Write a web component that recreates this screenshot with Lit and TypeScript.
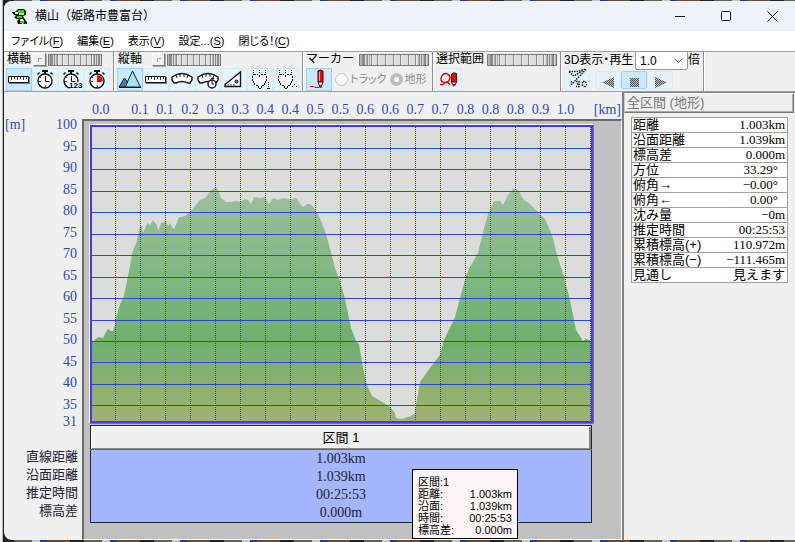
import { LitElement, html, svg, css } from "lit";
import { customElement } from "lit/decorators.js";

type Icon = { name: string; art: unknown; on?: boolean };

const clock = svg`
  <path d="M9 1h6v2h-2v2h-2V3H9zM4 5l2-2 1 1-2 2zM18 3l2 2-1 1-2-2z" fill="#111"/>
  <circle cx="12" cy="12" r="7" fill="#fff" stroke="#111" stroke-width="1.4"/>
  <path d="M12.500 7v5.500h4" fill="none" stroke="#111"/>
  <path d="M6 12.500h2M12.500 16v2M7.500 8v1M16.500 16v1M7.500 16v1" stroke="#555"/>`;
const ruler = svg`
  <path d="M1.500 7.500h20v6h-20z" fill="#fff" stroke="#111"/>
  <path d="M2 14.500h21M22.500 8v7" stroke="#777"/>
  <path d="M4.500 8v3M7.500 8v2M10.500 8v3M13.500 8v2M16.500 8v3M19.500 8v2" stroke="#333"/>`;
const arcRuler = svg`
  <path d="M2 8q10-7 20 0v3l-2 3h-2q-6-3-12 0H4l-2-3z" fill="#fff" stroke="#111" stroke-width="1.400"/>
  <path d="M6 6l1 3M10 5v3M14 5v3M18 6l-1 3" stroke="#222"/>`;
const heart = svg`
  <path d="M6 7h12v8l-4 4h-3l-4-4z" fill="#fff"/>
  <g shape-rendering="crispEdges" fill="none" stroke="#111">
    <path d="M5.500 1v5M11.500 1v3M17.500 1v5" stroke-dasharray="1 1"/>
    <path d="M6 5.500h4M13 5.500h4M11.500 6v2M4.500 7v5M18.500 7v5" stroke-dasharray="2 1"/>
    <path d="M5.500 12v2M17.500 12v2M6.500 14v2M16.500 14v2M8 16.500h2M14 16.500h2M10.500 17v2M13.500 17v2M11 19.500h2"/>
  </g>`;

const wheelPath = [2, 3, 4, 6, 9, 14, 20, 26, 32, 38, 43, 46, 48, 50, 51];

const horizontalTools: Icon[] = [
  { name: "距離", art: ruler, on: true },
  { name: "時間", art: clock },
  { name: "時刻", art: svg`${clock}<path d="M11 13h13v7H11z" fill="#e5f3ff"/><text x="10" y="19" class="tiny">123</text>` },
  { name: "経過", art: svg`${clock}<path d="M12 12V6a6 6 0 0 1 6 6z" fill="#f00"/>` },
];
const verticalTools: Icon[] = [
  { name: "標高", on: true, art: svg`<path d="M7 18L14.500 2 22.500 18z" fill="#a4e2f5" stroke="#123"/><path d="M1 18L6.500 9l3 4-2 5z" fill="#52798d" stroke="#123"/><path d="M1 18.500h22" stroke="#111"/>` },
  { name: "距離", art: ruler },
  { name: "沿面", art: arcRuler },
  { name: "沿面時間", art: svg`${arcRuler}<circle cx="16" cy="15" r="4" fill="#fff" stroke="#111" stroke-width="1.400"/><path d="M16 12v3h2M15 9.500h3" fill="none" stroke="#111"/>` },
  { name: "傾斜", art: svg`<path d="M3 15.500L18.500 3v14.500H3z" fill="#fff" stroke="#111" stroke-width="1.400"/><circle cx="14.500" cy="12.500" r="1.500" fill="#777" stroke="#111"/><path d="M6 15v2M9 15v2M12 15v2" stroke="#555"/>` },
  { name: "心拍1", art: svg`${heart}<path d="M20.500 13v7M19 19.500h4" fill="none" stroke="#111" stroke-dasharray="1 1" shape-rendering="crispEdges"/>` },
  { name: "心拍2", art: svg`${heart}<path d="M18 17.500h1M20 15.500h1M22 17.500h1" stroke="#111" shape-rendering="crispEdges"/>` },
];
const pen = svg`<path d="M11 2q2.500-2 5 0v11h-5z" fill="#f00" stroke="#500"/><path d="M12.500 3v9" stroke="#fbb"/><path d="M11 13h5l-2 5h-1z" fill="#fff" stroke="#500"/><path d="M12.500 16h2v3h-2z" fill="#d00"/>`;
const markerTools: Icon[] = [
  { name: "ペン", on: true, art: svg`${pen}<path d="M3 17.500h4l1 1h4" fill="none" stroke="#f00"/>` },
];
const rangeTools: Icon[] = [
  { name: "範囲", art: svg`<path d="M3 15.500h3l2-2q-4 0-4-4 1-5 5-5 4 1 4 4.500-1 4.500-5 4.500M8 13.500q3-1 5 2" fill="none" stroke="#f00" stroke-width="1.400"/><path d="M14.500 5q2-2 5-.5v8.500h-5z" fill="#f00" stroke="#500"/><path d="M14.500 13h5l-2 4h-1z" fill="#fff" stroke="#500"/><path d="M16 15h2v2h-2z" fill="#d00"/>` },
];
const viewTools: Icon[] = [
  { name: "3D", art: svg`<g fill="none" stroke="#111" stroke-width="1.400" stroke-dasharray="1.500 1"><path d="M4 3.500h8L21 1M4 4l5 4M21 1.500L5 18M10 7.500l8-5M6.500 13v4"/><path d="M11 13.500h3v5h-3M12 16h2M17.500 14v4M18 13.500h2l1.500 1.500v2L20 18.500h-2"/></g>` },
];
const playTools: Icon[] = [
  { name: "逆再生", art: svg`<path d="M18 5v11L6 10.500z" fill="url(#dots)"/>` },
  { name: "停止", on: true, art: svg`<path d="M8 6h9v9H8z" fill="url(#dots)"/>` },
  { name: "再生", art: svg`<path d="M7 5v11l12-5.500z" fill="url(#dots)"/>` },
];

const kmLabels = "0.0 0.1 0.1 0.2 0.3 0.3 0.4 0.4 0.5 0.5 0.6 0.6 0.7 0.7 0.8 0.8 0.8 0.9 1.0".split(" ");
const elevations = [100, 95, 90, 85, 80, 75, 70, 65, 60, 55, 50, 45, 40, 35, 31];
const gridRows = [148, 169, 191, 212, 234, 255, 277, 298, 320, 341, 362, 384, 405];
const gridCols = [91, ...Array.from({ length: 20 }, (_, i) => 115 + i * 25)];

const profile =
  "91,341 94,341 98,337 103,338 105,334 108,329 111,331 113,331 115,325 116,318 120,304 124,296 127,281 130,266 132,254 134,248 136,244 138,235 140,226 142,226 143,233 146,226 148,223 150,225 152,222 153,220 155,223 157,225 158,231 161,223 164,222 166,221 168,226 170,223 172,227 174,229 177,222 179,217 182,217 185,216 190,212 195,206 200,200 205,198 207,196 210,191 214,188 216,187 218,190 221,198 226,202 230,202 237,201 240,202 245,199 248,200 251,204 254,197 260,198 265,197 269,204 272,199 274,198 278,200 283,198 289,199 292,199 296,198 299,202 303,207 307,204 310,204 314,208 318,214 322,223 326,234 332,256 335,268 340,281 345,299 351,328 356,341 359,344 363,368 367,385 372,396 384,403 391,408 395,413 396,418 402,419 411,416 415,413 416,405 420,382 430,368 440,355 444,340 455,317 466,276 470,267 478,253 483,232 488,214 494,201 500,201 503,205 508,195 513,189 516,189 519,191 523,199 530,204 537,211 545,219 552,235 557,255 564,277 570,300 576,330 583,341 586,339 592,341";

const summary: [string, string][] = [
  ["距離", "1.003km"], ["沿面距離", "1.039km"], ["標高差", "0.000m"], ["方位", "33.29°"],
  ["俯角→", "−0.00°"], ["俯角←", "0.00°"], ["沈み量", "−0m"], ["推定時間", "00:25:53"],
  ["累積標高(+)", "110.972m"], ["累積標高(−)", "−111.465m"], ["見通し", "見えます"],
];
const section: [string, string][] = [
  ["直線距離", "1.003km"], ["沿面距離", "1.039km"], ["推定時間", "00:25:53"], ["標高差", "0.000m"],
];
const tip: [string, string][] = [
  ["距離:", "1.003km"], ["沿面:", "1.039km"], ["時間:", "00:25:53"], ["標高差:", "0.000m"],
];

@customElement("app-root")
export class AppRoot extends LitElement {
  static styles = css`
    :host {
      display: flex;
      box-sizing: border-box;
      min-height: 100vh;
      padding: 1px 0 2px 4px;
      color: #000;
      font: 13px/15px "Liberation Sans", "Noto Sans CJK JP", sans-serif;
      background:
        linear-gradient(90deg, #f4f4f4 2px, #b8b8b8 2px, #b8b8b8 3px, transparent 3px) 0 0 / 4px 100% no-repeat,
        repeating-linear-gradient(90deg, #222 0 14px, #5a6a4a 14px 32px, #c8c8c8 32px 40px, #223a9a 40px 47px, #6a4a2a 47px 70px);
    }
    * { box-sizing: border-box; }
    button { font: inherit; color: inherit; padding: 0; border: 0; background: none; white-space: nowrap; }
    table { border-collapse: collapse; }
    th, td { padding: 0; font-weight: 400; }
    .window { flex: 1; min-width: 0; display: flex; flex-direction: column; background: #f0f0f0; border-radius: 8px 0 0 8px; overflow: hidden; }
    .title { display: flex; align-items: center; height: 30px; padding-left: 7px; gap: 7px; background: #eef3fb; }
    .title h1 { flex: 1; margin: 0; font-size: 12px; font-weight: 400; }
    .controls { display: flex; }
    .controls button { width: 46px; height: 29px; display: grid; place-items: center; }
    .menu { display: flex; gap: 14px; height: 20px; align-items: center; padding-left: 7px; background: #fff; font-size: 11px; font-feature-settings: "palt"; }
    .menu u { text-underline-offset: 2px; }
    .toolbar { display: flex; height: 41px; border-top: 1px solid #a0a0a0; border-bottom: 1px solid #a0a0a0; }
    .group { display: flex; flex-direction: column; padding: 0 2px; border-right: 1px solid #909090; box-shadow: 1px 0 #fff; margin-right: 1px; }
    .head { display: flex; align-items: center; gap: 2px; height: 15px; padding: 0 1px; font-size: 12px; white-space: nowrap; }
    .head .wheel { margin-left: auto; }
    .head .mini + .wheel { margin-left: 0; }
    .h { width: 110px; } .v { width: 188px; } .m { width: 129px; } .r { width: 127px; } .d { width: 142px; }
    .m .head, .r .head { padding-left: 0; }
    .mini { width: 13px; height: 13px; border: 1px solid; border-color: #fff #777 #777 #fff; box-shadow: 1px 1px #aaa; display: grid; place-items: center; }
    .mini i { width: 4px; height: 4px; border: 1px solid #aaa; border-right: 0; border-bottom: 0; }
    .v .mini { margin-left: 8px; }
    .wheel { width: 54px; height: 12px; }
    .wide { width: 70px; }
    .row { display: flex; align-items: center; height: 24px; }
    .tool { flex: none; width: 26px; height: 23px; background: #e5f3ff; border: 1px solid #d6ebfc; }
    .tool.on { background: #cce8ff; border-color: #99d1ff; }
    .tool svg { display: block; overflow: visible; }
    .play { display: flex; margin-left: 5px; padding-top: 3px; }
    .play .tool { height: 18px; border-radius: 2px; display: grid; place-items: center; }
    .tiny { font: bold 8px "Liberation Sans", sans-serif; }
    .radio { display: flex; align-items: center; gap: 2px; margin-left: 3px; color: #8a8a8a; font-size: 11px; white-space: nowrap; font-feature-settings: "palt"; }
    .radio input { flex: none; appearance: none; width: 13px; height: 13px; margin: 0; border: 1px solid #c4c4c4; border-radius: 50%; background: #fbfbfb; }
    .radio input:checked { border: 4px solid #bdbdbd; background: #fff; }
    .d .head { height: 19px; margin-top: -1px; margin-bottom: -4px; padding-left: 0; gap: 0; }
    .d .head label { font-feature-settings: "palt"; }
    select { appearance: none; width: 53px; height: 19px; padding: 0 4px; font: 12px "Liberation Sans", sans-serif; border: 1px solid #999; border-radius: 2px; background: #fff; }
    .pick { display: grid; margin-left: auto; }
    .pick > * { grid-area: 1 / 1; }
    .pick svg { place-self: center end; margin-right: 5px; pointer-events: none; }
    .main { flex: 1; display: grid; grid-template-columns: 78px minmax(0, 1fr) 173px; }
    .axis { color: #3048c8; font: 14px/14px "Liberation Serif", serif; }
    .left { display: flex; flex-direction: column; padding-top: 26px; text-align: right; }
    .ylab { display: grid; grid-template-columns: 1fr auto; padding-right: 5px; }
    .ylab > span { text-align: left; padding-left: 1px; }
    .ylab ol { list-style: none; margin: 0; padding: 0; display: grid; grid-template-rows: repeat(13, minmax(0, 5fr)) minmax(0, 4fr) 14px; height: 311px; }
    .rows { list-style: none; margin: 0; padding: 19px 4px 0 0; line-height: 18px; color: #223; }
    .center { display: flex; flex-direction: column; min-width: 0; }
    .xlab { display: flex; height: 27px; padding: 11px 0 0 8px; }
    .xlab ol { flex: 1; list-style: none; margin: 0; padding: 0; display: grid; grid-template-columns: 3fr repeat(18, 2fr); text-align: center; }
    .xlab li:first-child { text-align: left; padding-left: 2px; }
    .xlab span { width: 44px; text-align: right; padding-right: 1px; }
    .board { flex: 1; position: relative; background: #c0c0c0; border: 2px solid #696969; border-right: 1px solid #fff; border-bottom: 1px solid #fff; padding: 3px 27px 15px 5px; }
    .plot { border: 1px solid; border-color: #fff #777 #777 #fff; }
    .plot svg { display: block; width: 100%; height: 298px; background: #dcdcdc; }
    .section { width: calc(100% - 3px); margin: 1px 2px 0 1px; text-align: center; background: #a4b6ff; border: 1px solid #223; color: #223; }
    .section th { height: 24px; color: #000; background: #f0f0f0; border-bottom: 1px solid #666; box-shadow: inset 1px 1px #fff, inset -2px -1px #888; }
    .section td { height: 18px; font: 14px/18px "Liberation Serif", serif; }
    .tip { position: absolute; left: 328px; top: 348px; width: 106px; padding: 6px 5px 2px; background: #fff5f5; border: 1px solid #000; font-size: 11px; line-height: 12px; }
    .tip table { width: 100%; }
    .tip td { text-align: right; }
    .tip th { text-align: left; }
    .side { border-left: 2px solid #808080; border-top: 1px solid #808080; padding-right: 1px; }
    .side h2 { margin: 0; height: 20px; padding-left: 2px; font-size: 13px; line-height: 17px; font-weight: 400; color: #777; border: 1px solid; border-color: #fff #777 #777 #ccc; box-shadow: inset -1px -1px #aaa; }
    .side table { width: calc(100% - 13px); margin: 4px 6px 0 7px; background: #fff; border: 1px solid #a0a0a0; }
    .side tr { border-bottom: 1px solid #a0a0a0; }
    .side th, .side td { height: 15px; line-height: 14px; white-space: nowrap; }
    .side th { text-align: left; padding-left: 1px; }
    .side td { text-align: right; padding-right: 2px; font-family: "Liberation Serif", "Noto Sans CJK JP", serif; }
    .side td.deg { padding-right: 9px; }
  `;

  private tools(list: Icon[]) {
    return list.map(
      (t) => html`<button class="tool ${t.on ? "on" : ""}" aria-label=${t.name}>
        <svg width="24" height="20" viewBox="0 0 24 20">
          <defs><pattern id="dots" width="2" height="2" patternUnits="userSpaceOnUse"><path d="M0 0h2v2H0z" fill="#bbb"/><path d="M0 0h1v1H0zM1 1h1v1H1z" fill="#555"/></pattern></defs>
          ${t.art}
        </svg>
      </button>`
    );
  }

  private wheel(wide = false) {
    const w = wide ? 70 : 54;
    const k = w / 54;
    const edge = Math.round(8 * k);
    return html`<svg class="wheel ${wide ? "wide" : ""}" viewBox="0 0 ${w} 12">
      <path d="M0 0H${w}V12H0Z" fill="#dedede" />
      <path d="M1 1h${edge}v10h-${edge}zM${w - edge - 1} 1h${edge}v10h-${edge}z" fill="#b4b4b4" />
      ${wheelPath.map((x) => svg`<path d="M${Math.round(x * k) + 0.5} 1v10" stroke="#8c8c8c"/><path d="M${Math.round(x * k) + 1.5} 1v10" stroke="#f4f4f4" opacity=".6"/>`)}
      <path d="M.5 .5H${w - 0.5}V11.500H.5Z" fill="none" stroke="#777" />
    </svg>`;
  }

  private mini(name: string) {
    return html`<button class="mini" aria-label=${name}><i></i></button>`;
  }

  render() {
    return html`
      <div class="window">
        <header class="title">
          <svg width="17" height="17" viewBox="0 0 17 17">
            <path d="M1 4h3l3-3h6l2 2v4l-3 1 1 2 3 4v2h-3l-1-1-2 1H7l-1-3 2-2H5L3 9l2-1-3-2z" fill="#111" />
            <path d="M4 4h3v2H4zM9 11h3l1 2H9z" fill="#fff" />
            <path d="M7 2h6v3H7zM9 13h4v2H9zM6 8h5v2H6z" fill="#3c3" />
            <path d="M8 5h5v2H8z" fill="#ee2" />
          </svg>
          <h1>横山（姫路市豊富台）</h1>
          <div class="controls">
            <button aria-label="最小化"><svg width="11" height="11"><path d="M0 5.500h10" stroke="#111" /></svg></button>
            <button aria-label="最大化"><svg width="11" height="11"><rect x=".5" y=".5" width="9" height="9" rx="1" fill="none" stroke="#111" /></svg></button>
            <button aria-label="閉じる"><svg width="11" height="11"><path d="M.5 .5l10 10M10.500 .5l-10 10" stroke="#111" /></svg></button>
          </div>
        </header>
        <nav class="menu">
          <button>ファイル(<u>F</u>)</button><button>編集(<u>E</u>)</button><button>表示(<u>V</u>)</button><button>設定...(<u>S</u>)</button><button>閉じる！(<u>C</u>)</button>
        </nav>
        <div class="toolbar">
          <div class="group h">
            <div class="head"><span>横軸</span>${this.mini("横軸リセット")}${this.wheel()}</div>
            <div class="row">${this.tools(horizontalTools)}</div>
          </div>
          <div class="group v">
            <div class="head"><span>縦軸</span>${this.mini("縦軸リセット")}${this.wheel()}</div>
            <div class="row">${this.tools(verticalTools)}</div>
          </div>
          <div class="group m">
            <div class="head"><span>マーカー</span>${this.wheel(true)}</div>
            <div class="row">
              ${this.tools(markerTools)}
              <label class="radio"><input type="radio" name="mark" disabled />トラック</label>
              <label class="radio"><input type="radio" name="mark" checked disabled />地形</label>
            </div>
          </div>
          <div class="group r">
            <div class="head"><span>選択範囲</span>${this.wheel(true)}</div>
            <div class="row">${this.tools(rangeTools)}</div>
          </div>
          <div class="group d">
            <div class="head">
              <label for="speed">3D表示・再生</label>
              <div class="pick">
                <select id="speed"><option>1.0</option></select>
                <svg width="9" height="6"><path d="M.5 .5l4 4 4-4" fill="none" stroke="#666" /></svg>
              </div>
              <span>倍</span>
            </div>
            <div class="row">${this.tools(viewTools)}<div class="play">${this.tools(playTools)}</div></div>
          </div>
        </div>
        <div class="main">
          <div class="left">
            <div class="ylab axis">
              <span>[m]</span>
              <ol>${elevations.map((e) => html`<li>${e}</li>`)}</ol>
            </div>
            <ul class="rows">${section.map(([k]) => html`<li>${k}</li>`)}</ul>
          </div>
          <div class="center">
            <div class="xlab axis">
              <ol>${kmLabels.map((k) => html`<li>${k}</li>`)}</ol>
              <span>[km]</span>
            </div>
            <div class="board">
              <div class="plot">
                <svg viewBox="90 125 503 298" preserveAspectRatio="none" role="img" aria-label="標高断面図">
                  <defs>
                    <linearGradient id="land" gradientUnits="userSpaceOnUse" x1="0" y1="188" x2="0" y2="422">
                      <stop offset="0" stop-color="#9cc09e" /><stop offset=".65" stop-color="#6db06e" /><stop offset="1" stop-color="#a3b173" />
                    </linearGradient>
                  </defs>
                  <path d="M91,422 L${profile} 592,422Z" fill="url(#land)" />
                  <g shape-rendering="crispEdges">
                    ${gridRows.map((y) => svg`<path d="M91 ${y + 0.5}H592" stroke="#2c48cc"/>`)}
                    ${gridCols.map((x) => svg`<path d="M${x + 0.5} 127V422" stroke="#2c38f0" stroke-dasharray="1 1"/>`)}
                    <path d="M91 126H592V422H91Z" fill="none" stroke="#4038ff" stroke-width="2" />
                  </g>
                </svg>
              </div>
              <table class="section">
                <thead><tr><th scope="col">区間 1</th></tr></thead>
                <tbody>${section.map(([k, v]) => html`<tr><td aria-label="${k} ${v}">${v}</td></tr>`)}</tbody>
              </table>
              <div class="tip" role="tooltip">
                区間:1
                <table>${tip.map(([k, v]) => html`<tr><th scope="row">${k}</th><td>${v}</td></tr>`)}</table>
              </div>
            </div>
          </div>
          <aside class="side">
            <h2>全区間 (地形)</h2>
            <table>
              ${summary.map(([k, v]) => html`<tr><th scope="row">${k}</th><td class=${v.endsWith("°") ? "deg" : ""}>${v}</td></tr>`)}
            </table>
          </aside>
        </div>
      </div>
    `;
  }
}
